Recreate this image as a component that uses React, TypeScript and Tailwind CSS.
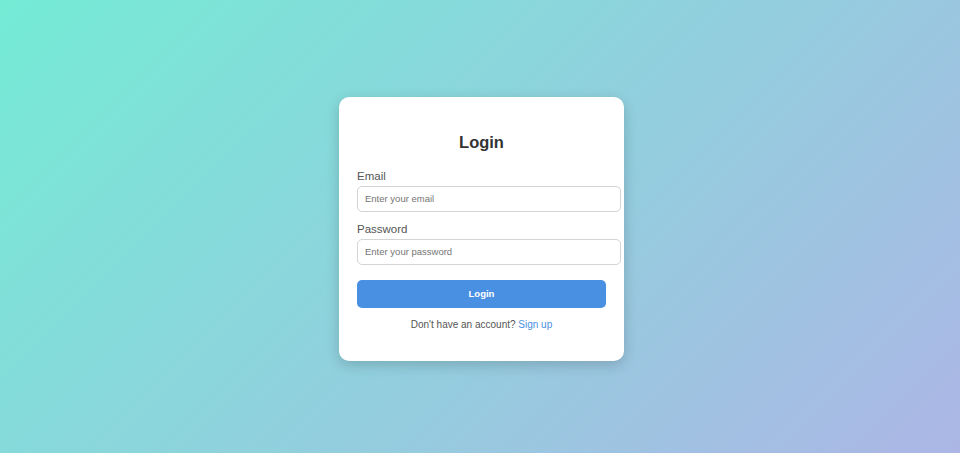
import React from "react";

export default function App() {
  return (
    <div
      className="flex h-[453px] w-full items-center justify-center bg-[linear-gradient(135deg,#74ebd5,#acb6e5)] pl-[3px] pt-[5px]"
      style={{ fontFamily: '"Liberation Sans", Arial, sans-serif' }}
    >
      <div className="w-[285px] rounded-[10px] bg-white px-[18px] pb-[30px] pt-[36px] shadow-[0_4px_14px_rgba(0,0,0,0.18)]">
        <h2 className="mb-[17px] text-center text-[16.5px] font-bold leading-[19px] text-[#333]">Login</h2>
        <div className="mb-[10px]">
          <label className="mb-[3px] block text-[11.5px] leading-[14px] text-[#555]">Email</label>
          <input
            type="email"
            placeholder="Enter your email"
            className="block h-[26px] w-[264px] rounded-[5px] border border-[#d4d4d4] px-[7px] text-[9.5px] text-[#333] outline-none placeholder:text-[#757575]"
          />
        </div>
        <div className="mb-[15px]">
          <label className="mb-[3px] block text-[11.5px] leading-[14px] text-[#555]">Password</label>
          <input
            type="password"
            placeholder="Enter your password"
            className="block h-[26px] w-[264px] rounded-[5px] border border-[#d4d4d4] px-[7px] text-[9.5px] text-[#333] outline-none placeholder:text-[#757575]"
          />
        </div>
        <button className="block h-[28px] w-full rounded-[5px] bg-[#4a90e2] text-[9.5px] font-bold text-white">
          Login
        </button>
        <p className="mt-[11.5px] text-center text-[10px] leading-[12px] text-[#555]">
          Don't have an account? <a className="text-[#4a90e2]">Sign up</a>
        </p>
      </div>
    </div>
  );
}
